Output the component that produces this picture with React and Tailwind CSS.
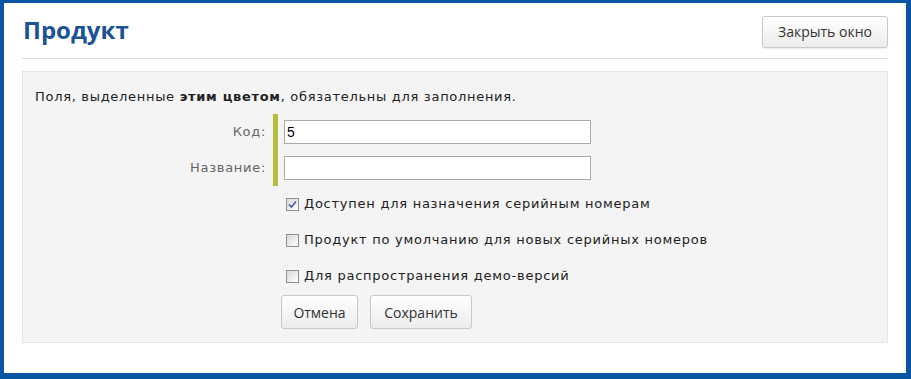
export default function App() {
  const verdana = { fontFamily: '"DejaVu Sans", Verdana, sans-serif' };
  const sans = { fontFamily: '"Open Sans", "Noto Sans", sans-serif' };
  return (
    <div className="w-[911px] h-[379px] bg-[#0a55a3] pt-[3px] pl-[4px] pr-[5px] pb-[6px] overflow-hidden">
      <div className="w-full h-full bg-white px-[18px]">
        <div className="flex items-center justify-between h-[56px] border-b border-[#dcdcdc]">
          <h1 className="text-[24px] font-bold text-[#1c5394] leading-none -mt-[2px] ml-[1px]" style={sans}>
            Продукт
          </h1>
          <button
            className="h-[32px] w-[126px] mt-[2px] rounded-[3px] border border-[#c8c8c8] bg-gradient-to-b from-[#ffffff] to-[#ececec] text-[14px] text-[#333] shadow-[0_1px_1px_rgba(0,0,0,0.08)]"
            style={sans}
          >
            Закрыть окно
          </button>
        </div>
        <div className="mt-[12px] h-[272px] bg-[#f4f4f4] border border-[#e6e6e6] pl-[12px] pt-[15px]" style={verdana}>
          <p className="text-[13px] tracking-[0.7px] text-[#222] leading-[20px]">
            Поля, выделенные <b>этим цветом</b>, обязательны для заполнения.
          </p>
          <div className="mt-[7px] flex">
            <div className="w-[238px] flex flex-col items-end pr-[7px] text-[13px] tracking-[0.7px] text-[#666]">
              <div className="h-[36px] flex items-center">Код:</div>
              <div className="h-[36px] flex items-center">Название:</div>
            </div>
            <div className="border-l-[5px] border-[#b3bf3b] pl-[6px] py-[6px] flex flex-col gap-[12px]">
              <input
                defaultValue="5"
                className="w-[307px] h-[24px] border border-[#aaa] bg-white px-[2px] text-[14px] text-black outline-none"
                style={{ fontFamily: '"Liberation Sans", Arial, sans-serif' }}
              />
              <input
                className="w-[307px] h-[24px] border border-[#aaa] bg-white px-[2px] text-[14px] outline-none"
                style={{ fontFamily: '"Liberation Sans", Arial, sans-serif' }}
              />
            </div>
          </div>
          <div className="ml-[251px] flex flex-col">
            {[
              ["Доступен для назначения серийным номерам", true],
              ["Продукт по умолчанию для новых серийных номеров", false],
              ["Для распространения демо-версий", false],
            ].map(([label, checked]) => (
              <label key={label} className="h-[36px] flex items-center text-[13px] tracking-[0.75px] text-[#222]">
                <span className="w-[13px] h-[13px] border border-[#8f8f8f] bg-gradient-to-br from-[#d8d8d8] to-[#ffffff] flex items-center justify-center mr-[5px]">
                  {checked && (
                    <svg width="9" height="9" viewBox="0 0 9 9">
                      <path d="M1 4.5 L3.5 7 L8 1.5" fill="none" stroke="#3a5ca8" strokeWidth="1.6" />
                    </svg>
                  )}
                </span>
                {label}
              </label>
            ))}
          </div>
          <div className="ml-[246px] mt-[1px] flex gap-[12px]" style={sans}>
            <button className="h-[34px] w-[77px] rounded-[3px] border border-[#c8c8c8] bg-gradient-to-b from-[#ffffff] to-[#ececec] text-[14px] text-[#333]">
              Отмена
            </button>
            <button className="h-[34px] w-[102px] rounded-[3px] border border-[#c8c8c8] bg-gradient-to-b from-[#ffffff] to-[#ececec] text-[14px] text-[#333]">
              Сохранить
            </button>
          </div>
        </div>
      </div>
    </div>
  );
}
